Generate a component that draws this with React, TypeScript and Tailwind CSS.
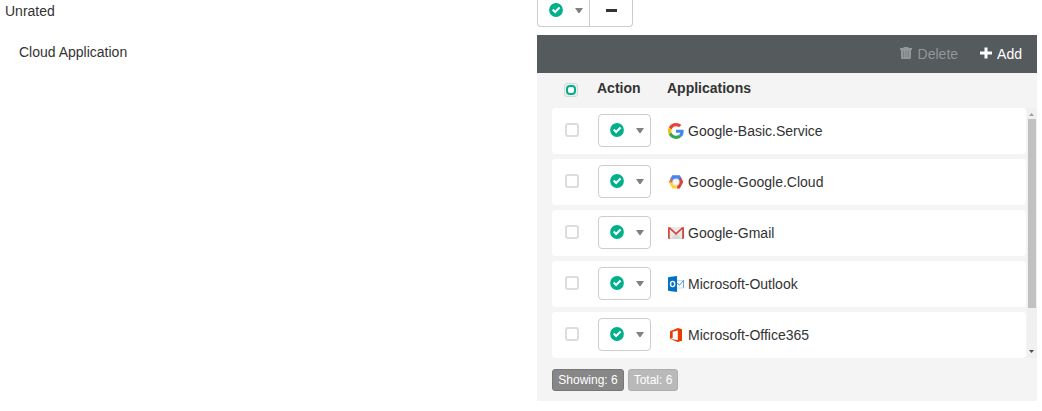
import type { ReactNode } from "react";

function CheckCircle() {
  return (
    <svg width="14" height="14" viewBox="0 0 14 14" className="shrink-0">
      <circle cx="7" cy="7" r="6.9" fill="#00b08b" />
      <path d="M3.7 6.6L6.1 9L10.6 4.5" fill="none" stroke="#fff" strokeWidth="2.1" />
    </svg>
  );
}

function Caret() {
  return (
    <svg width="8" height="5" viewBox="0 0 8 5" className="shrink-0">
      <path d="M0 0H8L4.6 5H3.4Z" fill="#808080" />
    </svg>
  );
}

function ActionSelect() {
  return (
    <button className="-mt-[2px] flex h-[33px] w-[53px] items-center rounded-[4px] border border-[#ccc] bg-white pl-[11px]">
      <CheckCircle />
      <span className="ml-[12px] mt-px">
        <Caret />
      </span>
    </button>
  );
}

function GoogleIcon() {
  return (
    <svg width="16" height="16" viewBox="0 0 48 48">
      <path fill="#EA4335" d="M24 9.5c3.54 0 6.71 1.22 9.21 3.6l6.85-6.85C35.9 2.38 30.47 0 24 0 14.62 0 6.51 5.38 2.56 13.22l7.98 6.19C12.43 13.72 17.74 9.5 24 9.5z" />
      <path fill="#4285F4" d="M46.98 24.55c0-1.57-.15-3.09-.38-4.55H24v9.02h12.94c-.58 2.96-2.26 5.48-4.78 7.18l7.73 6c4.51-4.18 7.09-10.36 7.09-17.65z" />
      <path fill="#FBBC05" d="M10.53 28.59c-.48-1.45-.76-2.99-.76-4.59s.27-3.14.76-4.59l-7.98-6.19C.92 16.46 0 20.12 0 24c0 3.88.92 7.54 2.56 10.78l7.97-6.19z" />
      <path fill="#34A853" d="M24 48c6.48 0 11.93-2.13 15.89-5.81l-7.73-6c-2.15 1.45-4.92 2.3-8.16 2.3-6.26 0-11.57-4.22-13.47-9.91l-7.98 6.19C6.51 42.62 14.62 48 24 48z" />
    </svg>
  );
}

function CloudIcon() {
  return (
    <svg width="16" height="16" viewBox="0 0 16 16">
      <path d="M4.3 1.3H11.8L13.6 4.4L11 6.5L8 5L5 6.5L2.4 4.6Z" fill="#4285f4" />
      <path d="M13.2 3.7L15.3 8L11.8 14.5H9L8.6 12L10 11L11.2 8L10.4 5.8Z" fill="#db4437" />
      <path d="M0.9 8.2L4.6 8L6.3 11.2L9.4 11.4L9 14.6H4.4Z" fill="#fdd231" />
      <path d="M2.6 4.2L5.2 6L4.8 8.4L0.9 8.2Z" fill="#db6b54" />
      <circle cx="8" cy="8" r="3.6" fill="#e9edf2" />
      <circle cx="8" cy="8" r="2.3" fill="#f8f8f8" />
    </svg>
  );
}

function GmailIcon() {
  return (
    <svg width="16" height="16" viewBox="0 0 16 16">
      <path d="M1 2H15V14H1Z" fill="#eaeaea" />
      <path d="M2 14L8 8.5L14 14Z" fill="#d8d8d8" />
      <path d="M1.3 2.7L8 8.9L14.7 2.7" fill="none" stroke="#db4437" strokeWidth="1.6" />
      <path d="M0 3Q0 2 1 2L1.8 3V14H1Q0 14 0 13Z" fill="#d54b3d" />
      <path d="M16 3Q16 2 15 2L14.2 3V14H15Q16 14 16 13Z" fill="#c9453a" />
    </svg>
  );
}

function OutlookIcon() {
  return (
    <svg width="16" height="16" viewBox="0 0 16 16">
      <path d="M9 4.5H15.5V12H9" fill="#fff" stroke="#b5d6ee" strokeWidth="0.8" />
      <path d="M9.4 7L11.4 9.3L15.5 4.5" fill="none" stroke="#1675c4" strokeWidth="0.8" />
      <path d="M15.6 4V12" stroke="#4a9bd8" strokeWidth="0.8" />
      <path d="M0 1.4L1.2 1L9 0V16L1.2 15L0 14.6Z" fill="#0072c6" />
      <ellipse cx="4.6" cy="8" rx="2.1" ry="2.6" fill="none" stroke="#fff" strokeWidth="1.4" />
    </svg>
  );
}

function OfficeIcon() {
  return (
    <svg width="16" height="16" viewBox="0 0 16 16">
      <path d="M2 4.2L9.8 1L14 2.2V13.8L9.8 15L2 12.1L9.8 13V3.4L4.7 4.7V10.9L2 12.1Z" fill="#eb3c00" />
    </svg>
  );
}

const rows: { name: string; icon: ReactNode }[] = [
  { name: "Google-Basic.Service", icon: <GoogleIcon /> },
  { name: "Google-Google.Cloud", icon: <CloudIcon /> },
  { name: "Google-Gmail", icon: <GmailIcon /> },
  { name: "Microsoft-Outlook", icon: <OutlookIcon /> },
  { name: "Microsoft-Office365", icon: <OfficeIcon /> },
];

function Toolbar() {
  return (
    <div className="flex h-[38px] items-center justify-end bg-[#555a5d] pr-[15px]">
      <button className="flex items-center text-[#94979a]">
        <svg width="12" height="12" viewBox="0 0 12 12" className="-mt-[2px] mr-[6px]">
          <path d="M3.5 0H8.5V1H12V3H0V1H3.5Z" fill="currentColor" />
          <path d="M1 3H11V11Q11 12 10 12H2Q1 12 1 11Z" fill="currentColor" />
          <path d="M3.5 4V10.5M6 4V10.5M8.5 4V10.5" stroke="#7d8184" strokeWidth="1" />
        </svg>
        Delete
      </button>
      <button className="ml-[22px] flex items-center text-white">
        <svg width="12" height="12" viewBox="0 0 12 12" className="mr-[5px] -mt-[2px]">
          <path d="M4.5 0.5H7.5V4.5H12V7.5H7.5V11.5H4.5V7.5H0V4.5H4.5Z" fill="currentColor" />
        </svg>
        Add
      </button>
    </div>
  );
}

function Scrollbar() {
  return (
    <div className="ml-px flex h-[250px] w-[10px] flex-col items-center bg-[#f0f0f0]">
      <svg width="10" height="11" viewBox="0 0 10 11">
        <path d="M2 8L4.5 5L7 8Z" fill="#a3a3a3" />
      </svg>
      <div className="h-[189px] w-[8px] bg-[#c1c1c1]" />
      <svg width="10" height="10" viewBox="0 0 10 10" className="mt-auto -mb-px">
        <path d="M2 1H7L4.5 4Z" fill="#505050" />
      </svg>
    </div>
  );
}

export default function App() {
  return (
    <div className="flex h-[411px] w-[1042px] overflow-hidden bg-white font-['Liberation_Sans',Arial,sans-serif] text-[14px] leading-[20px] text-[#333]">
      <div className="w-[537px]">
        <div className="pl-[5px] pt-px">Unrated</div>
        <div className="mt-[21px] pl-[19px]">Cloud Application</div>
      </div>
      <div className="w-[500px]">
        <div className="mb-[8px] flex h-[27px] w-[96px] rounded-b-[4px] border border-t-0 border-[#ccc]">
          <div className="flex w-[52px] items-start border-r border-[#ccc] pl-[11px] pt-[3px]">
            <CheckCircle />
            <span className="ml-[12px] mt-[5px]">
              <Caret />
            </span>
          </div>
          <div className="flex flex-1 justify-center pt-[9px]">
            <div className="h-[3px] w-[11px] bg-[#333]" />
          </div>
        </div>
        <div className="h-[366px] bg-[#f4f4f4]">
          <Toolbar />
          <div className="flex h-[35px] font-bold">
            <span className="ml-[27px] mt-[10px] flex size-[14px] items-center justify-center rounded-[3px] border border-[#d8d8d8] bg-[#eee]">
              <span className="size-[10px] rounded-[4px] border-2 border-[#00b08b] bg-white" />
            </span>
            <span className="ml-[19px] mt-[5px] w-[70px]">Action</span>
            <span className="mt-[5px]">Applications</span>
          </div>
          <div className="flex pl-[15px]">
            <div className="flex w-[474px] flex-col gap-[5px]">
              {rows.map((r) => (
                <div key={r.name} className="flex h-[46px] items-center rounded-[4px] bg-white pl-[13px]">
                  <span className="-mt-[2px] mr-[19px] size-[14px] rounded-[3px] border-2 border-[#ddd]" />
                  <ActionSelect />
                  <span className="ml-[17px] mr-[4px]">{r.icon}</span>
                  {r.name}
                </div>
              ))}
            </div>
            <Scrollbar />
          </div>
          <div className="mt-[11px] flex gap-[4px] pl-[15px] text-[12px] leading-[20px] text-white">
            <span className="w-[72px] rounded-[3px] border border-[#777] bg-[#878787] text-center">Showing: 6</span>
            <span className="w-[50px] rounded-[3px] border border-[#adadad] bg-[#b9b9b9] text-center">Total: 6</span>
          </div>
        </div>
      </div>
    </div>
  );
}
